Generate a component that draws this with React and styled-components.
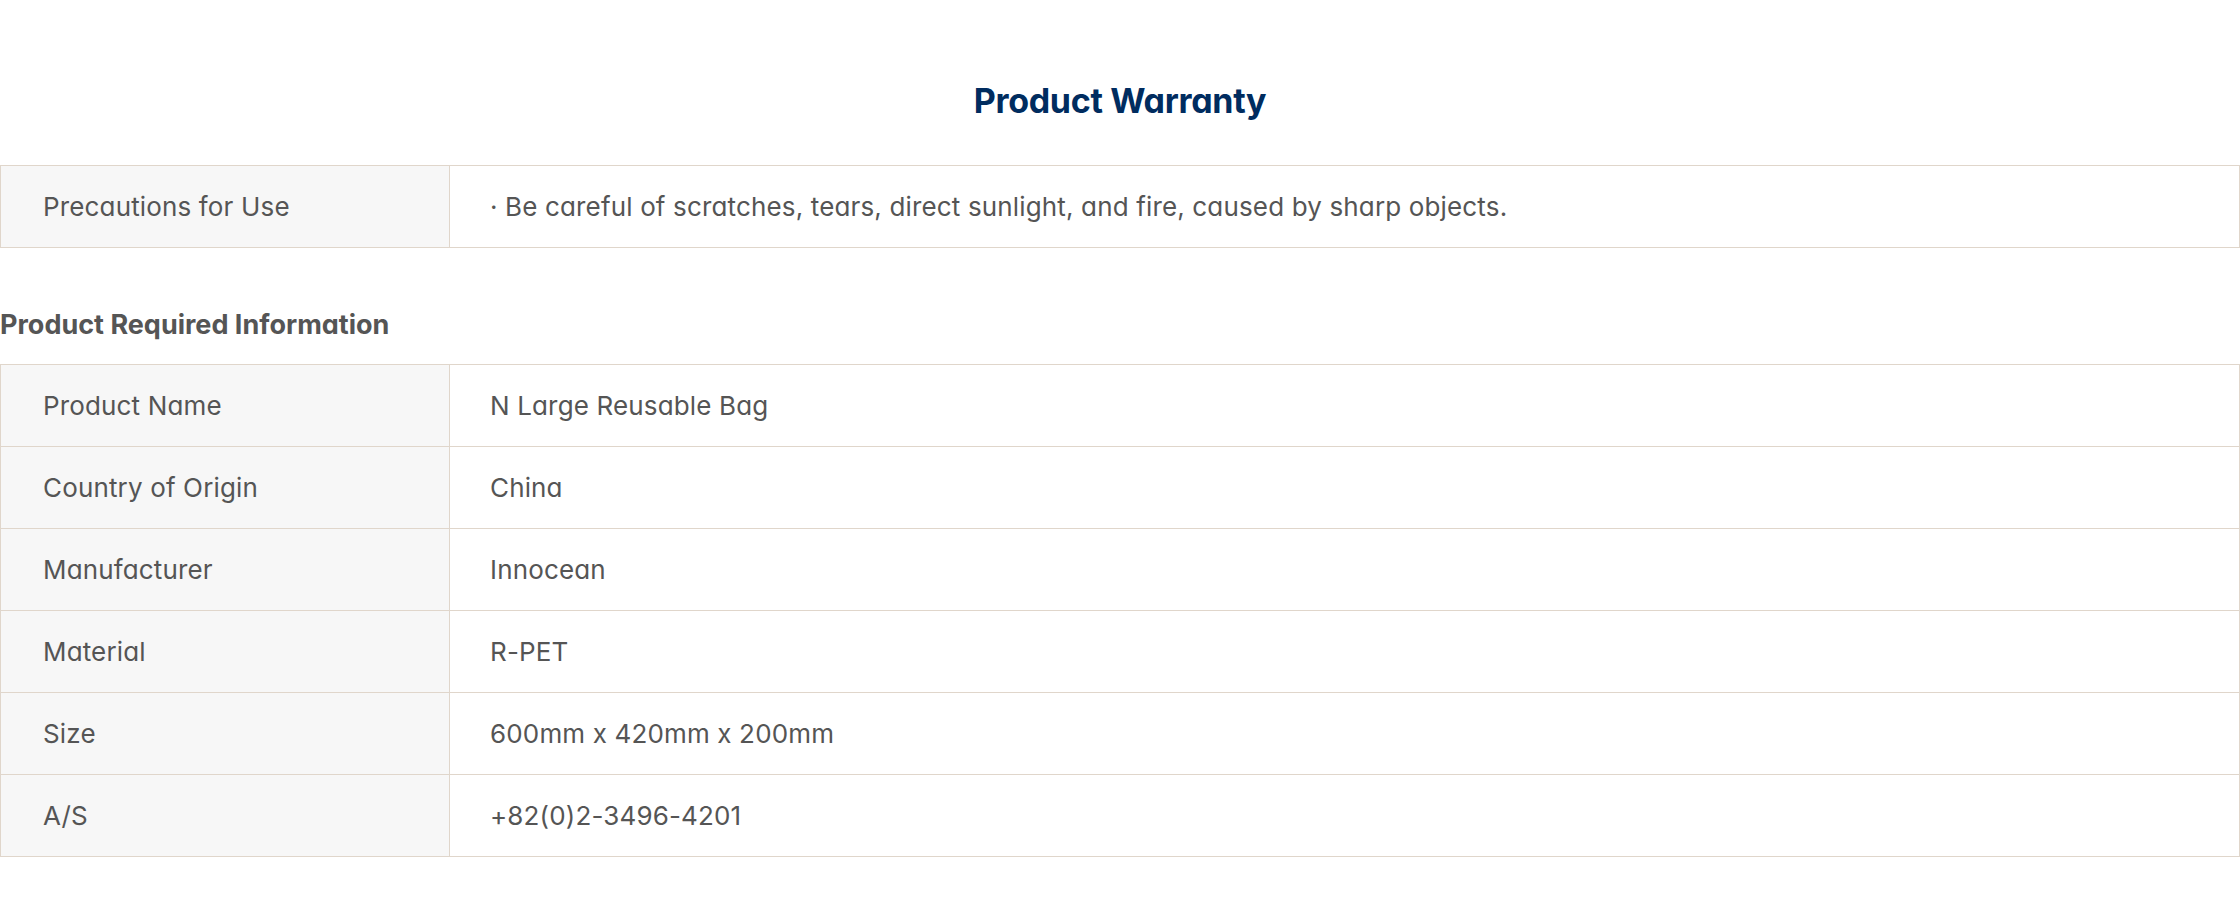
import React from 'react'
import styled, { createGlobalStyle } from 'styled-components'

const GlobalStyle = createGlobalStyle`
  body {
    margin: 0;
    background: #fff;
    font-family: Inter, "Noto Sans", sans-serif;
    font-feature-settings: "cv11";
  }
`

const warranty = [
  {
    label: 'Precautions for Use',
    value: '· Be careful of scratches, tears, direct sunlight, and fire, caused by sharp objects.',
  },
]

const required = [
  { label: 'Product Name', value: 'N Large Reusable Bag' },
  { label: 'Country of Origin', value: 'China' },
  { label: 'Manufacturer', value: 'Innocean' },
  { label: 'Material', value: 'R-PET' },
  { label: 'Size', value: '600mm x 420mm x 200mm' },
  { label: 'A/S', value: '+82(0)2-3496-4201' },
]

const InfoTable = ({ rows }) => (
  <Table>
    <tbody>
      {rows.map((row) => (
        <tr key={row.label}>
          <Th>{row.label}</Th>
          <Td>{row.value}</Td>
        </tr>
      ))}
    </tbody>
  </Table>
)

const App = () => {
  return (
    <Page>
      <GlobalStyle />
      <Title>Product Warranty</Title>
      <InfoTable rows={warranty} />
      <SubTitle>Product Required Information</SubTitle>
      <InfoTable rows={required} />
    </Page>
  )
}

const Page = styled.section`
  width: 100%;
  padding-top: 82px;
  padding-bottom: 62px;
`

const Title = styled.h2`
  margin: 0 0 45px;
  text-align: center;
  color: #002c5f;
  font-size: 34px;
  line-height: 38px;
  font-weight: 700;
  letter-spacing: -0.3px;
`

const SubTitle = styled.h3`
  margin: 60px 0 22px;
  color: #555;
  font-size: 27px;
  line-height: 34px;
  font-weight: 700;
  letter-spacing: 0;
`

const Table = styled.table`
  width: 100%;
  border-collapse: collapse;
  border: 1px solid #e0d6cb;
  color: #555;
  font-size: 26px;
  letter-spacing: 0.15px;
`

const Th = styled.th`
  width: 406px;
  height: 81px;
  padding: 0 0 0 42px;
  border: 1px solid #e0d6cb;
  background: #f7f7f7;
  text-align: left;
  font-weight: 400;
`

const Td = styled.td`
  height: 81px;
  padding: 0 0 0 40px;
  border: 1px solid #e0d6cb;
  background: #fff;
`

export default App
